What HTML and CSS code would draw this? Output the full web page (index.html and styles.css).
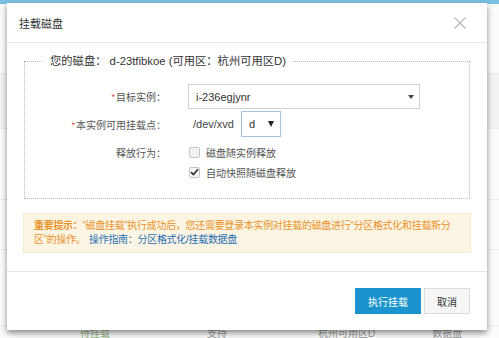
FILE: index.html
```html
<!DOCTYPE html>
<html lang="zh-CN">
<head>
<meta charset="utf-8">
<title>挂载磁盘</title>
<link rel="stylesheet" href="styles.css">
</head>
<body>
<div class="page">
  <div class="topbar"></div>
  <div class="bg-row r1"></div>
  <div class="bg-row r2"></div>
  <div class="bg-row r3"></div>
  <div class="bg-row r4"></div>
  <div class="bg-row r5"></div>
  <div class="bg-row last">
    <span class="c1">待挂载</span>
    <span class="c2">支持</span>
    <span class="c3">杭州可用区D</span>
    <span class="c4">数据盘</span>
  </div>
</div>

<div class="modal">
  <div class="modal-header">
    <span class="modal-title">挂载磁盘</span>
    <svg class="close" width="12" height="12" viewBox="0 0 12 12"><path d="M0.5 0.5 L11.5 11.5 M11.5 0.5 L0.5 11.5" stroke="#b9b9b9" stroke-width="1.3" fill="none"/></svg>
  </div>
  <div class="modal-body">
    <fieldset class="disk">
      <legend>您的磁盘： d-23tfibkoe (可用区：杭州可用区D)</legend>
      <div class="row r-inst">
        <label class="lbl"><span class="req">*</span>目标实例：</label>
        <div class="select wide"><span>i-236egjynr</span><span class="caret small"></span></div>
      </div>
      <div class="row r-mount">
        <label class="lbl"><span class="req">*</span>本实例可用挂载点：</label>
        <span class="prefix">/dev/xvd</span>
        <div class="select narrow"><span>d</span><span class="caret"></span></div>
      </div>
      <div class="row r-chk">
        <label class="lbl">释放行为：</label>
        <span class="cb"></span><span class="cb-text">磁盘随实例释放</span>
      </div>
      <div class="row r-chk">
        <span class="lbl"></span>
        <span class="cb checked"><svg width="9" height="8" viewBox="0 0 9 8"><path d="M1 4.2 L3.4 6.6 L8 1.2" stroke="#333" stroke-width="1.7" fill="none"/></svg></span><span class="cb-text">自动快照随磁盘释放</span>
      </div>
    </fieldset>
    <div class="notice">
      <b>重要提示：</b>“磁盘挂载”执行成功后，您还需要登录本实例对挂载的磁盘进行“分区格式化和挂载新分<br>区”的操作。 <a class="guide">操作指南：分区格式化/挂载数据盘</a>
    </div>
  </div>
  <div class="modal-footer">
    <button class="btn primary">执行挂载</button>
    <button class="btn">取消</button>
  </div>
</div>
</body>
</html>
```

FILE: styles.css
```css
html, body {
  margin: 0;
  padding: 0;
}
body {
  width: 499px;
  height: 338px;
  overflow: hidden;
  background: #fbfbfb;
  font-family: "Liberation Sans", "Noto Sans CJK SC", sans-serif;
  font-size: 10px;
  color: #333;
  position: relative;
}

/* background page */
.page {
  display: flex;
  flex-direction: column;
  height: 338px;
}
.topbar {
  height: 4px;
  background: #79bfe0;
}
.bg-row {
  border-bottom: 1px solid #ececec;
}
.r1 { height: 70px; }
.r2 { height: 55px; background: #f3f3f3; }
.r3 { height: 70px; }
.r4 { height: 50px; }
.r5 { height: 76px; }
.bg-row.last {
  border-bottom: none;
  display: flex;
  align-items: center;
  height: 12px;
  font-size: 10px;
  color: #9a9a9a;
}
.last .c1 { margin-left: 80px; color: #8db07d; }
.last .c2 { margin-left: 97px; }
.last .c3 { margin-left: 91px; }
.last .c4 { margin-left: 57px; }

/* modal */
.modal {
  position: absolute;
  left: 7px;
  top: 3px;
  width: 480px;
  height: 327px;
  background: #fff;
  box-shadow: 0 3px 6px rgba(0, 0, 0, 0.45);
  display: flex;
  flex-direction: column;
}
.modal-header {
  height: 40px;
  box-sizing: border-box;
  border-bottom: 1px solid #e6e6e6;
  display: flex;
  align-items: center;
  justify-content: space-between;
  padding: 0 21px 0 12px;
}
.modal-title {
  font-size: 11px;
  color: #333;
}
.close { display: block; }

.modal-body {
  padding: 10px 17px 0 17px;
  height: 229px;
  box-sizing: border-box;
  border-bottom: 1px solid #e6e6e6;
}
.disk {
  margin: 0;
  padding: 15px 0 17px 0;
  border: 1px dotted #b8b8b8;
  min-width: 0;
}
.disk legend {
  margin-left: 18px;
  padding: 0 7px;
  line-height: 16px;
  font-size: 11.3px;
  color: #333;
}
.row {
  display: flex;
  align-items: center;
}
.lbl {
  width: 141px;
  flex: none;
  text-align: right;
  color: #555;
  margin-right: 22px;
  font-size: 10px;
}
.req {
  color: #e2423a;
  font-size: 9px;
  vertical-align: 1px;
  margin-right: 1px;
}
.r-inst { height: 25px; }
.r-mount { height: 26px; margin-top: 2px; }
.r-chk { height: 18px; margin-top: 2px; }
.r-mount + .r-chk { margin-top: 6px; }

.select {
  box-sizing: border-box;
  display: flex;
  align-items: center;
  justify-content: space-between;
  border: 1px solid #d2d2d2;
  background: #fff;
  color: #333;
  font-size: 11px;
}
.select.wide {
  width: 232px;
  height: 25px;
  padding: 0 5px 0 7px;
}
.select.narrow {
  width: 40px;
  height: 26px;
  padding: 0 6px 0 7px;
  border-color: #a9c2da;
}
.prefix {
  margin-left: 5px;
  margin-right: 7px;
  color: #444;
  font-size: 11px;
}
.caret {
  width: 0;
  height: 0;
  border-left: 3.5px solid transparent;
  border-right: 3.5px solid transparent;
  border-top: 6px solid #222;
}
.caret.small {
  border-left-width: 3px;
  border-right-width: 3px;
  border-top-width: 4px;
  border-top-color: #444;
}
.cb {
  box-sizing: border-box;
  width: 11px;
  height: 11px;
  border: 1px solid #c6c6c6;
  border-radius: 2px;
  background: #f2f2f2;
  display: flex;
  align-items: center;
  justify-content: center;
  margin-left: 1px;
}
.cb.checked { background: #f6f6f6; }
.cb svg { display: block; }
.cb-text {
  margin-left: 6px;
  color: #555;
  font-size: 10px;
}

.notice {
  margin-top: 14px;
  margin-left: -1px;
  width: 448px;
  box-sizing: border-box;
  padding: 5px 10px;
  background: #fdf5e3;
  border: 1px solid #f7ecd3;
  color: #e8922a;
  font-size: 10px;
  letter-spacing: -0.3px;
  line-height: 14px;
  white-space: nowrap;
}
.notice b { font-weight: bold; }
.guide {
  color: #1f6fb5;
  margin-left: 1px;
}

.modal-footer {
  display: flex;
  justify-content: flex-end;
  gap: 3px;
  padding: 16px 17px 0 0;
}
.btn {
  height: 26px;
  border: 1px solid #dcdcdc;
  background: #f6f6f6;
  color: #333;
  font-family: inherit;
  font-size: 10px;
  padding: 0;
  width: 46px;
}
.btn.primary {
  width: 66px;
  background: #1a94cc;
  border-color: #1a94cc;
  color: #fff;
}
```
